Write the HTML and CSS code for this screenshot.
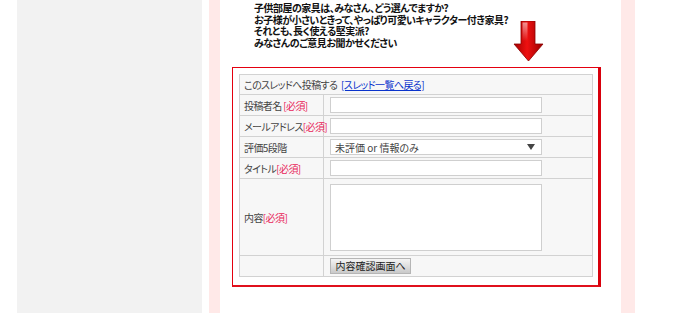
FILE: index.html
```html
<!DOCTYPE html>
<html lang="ja">
<head>
    <meta charset="UTF-8">
    <title>スレッドへ投稿する</title>
    <link rel="stylesheet" href="styles.css">
</head>
<body>

    <div class="page">
        <div class="sidebar"></div>

        <div class="main">
            <div class="intro">
                <p class="lead">
                    子供部屋の家具は、みなさん、どう選んでますか?<br>
                    お子様が小さいときって、やっぱり可愛いキャラクター付き家具?<br>
                    それとも、長く使える堅実派?<br>
                    みなさんのご意見お聞かせください
                </p>
                <svg class="arrow" width="31" height="41" viewBox="0 0 31 41">
                    <defs>
                        <linearGradient id="arrowFill" x1="0" y1="0" x2="1" y2="0">
                            <stop offset="0" stop-color="#a40000"/>
                            <stop offset="0.45" stop-color="#ee1111"/>
                            <stop offset="1" stop-color="#9a0000"/>
                        </linearGradient>
                        <linearGradient id="arrowShine" x1="0" y1="0" x2="0" y2="1">
                            <stop offset="0" stop-color="#ffffff" stop-opacity="0.55"/>
                            <stop offset="1" stop-color="#ffffff" stop-opacity="0"/>
                        </linearGradient>
                    </defs>
                    <path d="M8 0 H22 V23 H30 L15.5 40 L1 23 H8 Z" fill="url(#arrowFill)" stroke="#8a0000" stroke-width="0.8"/>
                    <path d="M9.5 1.5 H14.5 V20 H9.5 Z" fill="url(#arrowShine)"/>
                </svg>
            </div>

            <div class="form-box">
                <form>
                    <table class="post-table">
                        <colgroup>
                            <col class="col-label">
                            <col>
                        </colgroup>
                        <tr class="head-row">
                            <td colspan="2">このスレッドへ投稿する <a href="#">[スレッド一覧へ戻る]</a></td>
                        </tr>
                        <tr>
                            <th>投稿者名 <span class="req">[必須]</span></th>
                            <td><input type="text" class="field"></td>
                        </tr>
                        <tr>
                            <th>メールアドレス<span class="req">[必須]</span></th>
                            <td><input type="text" class="field"></td>
                        </tr>
                        <tr>
                            <th>評価5段階</th>
                            <td>
                                <div class="select">
                                    <span>未評価 or 情報のみ</span>
                                    <span class="caret"></span>
                                </div>
                            </td>
                        </tr>
                        <tr>
                            <th>タイトル<span class="req">[必須]</span></th>
                            <td><input type="text" class="field"></td>
                        </tr>
                        <tr class="body-row">
                            <th>内容<span class="req">[必須]</span></th>
                            <td><textarea class="field area"></textarea></td>
                        </tr>
                        <tr>
                            <th></th>
                            <td><button type="button" class="confirm">内容確認画面へ</button></td>
                        </tr>
                    </table>
                </form>
            </div>
        </div>
    </div>

</body>
</html>
```

FILE: styles.css
```css
* {
    margin: 0;
    padding: 0;
    box-sizing: border-box;
}

body {
    background: #fff;
    font-family: "Noto Sans CJK JP", "Noto Sans", sans-serif;
    font-feature-settings: "palt";
    color: #333;
}

.page {
    display: flex;
    height: 313px;
    overflow: hidden;
}

.sidebar {
    width: 185px;
    margin-left: 17px;
    background: #f2f2f2;
}

.main {
    width: 426px;
    margin-left: 7px;
    background: #fff;
    border-left: 11px solid #ffe9e8;
    border-right: 14px solid #ffe9e8;
}

/* intro text + arrow */
.intro {
    display: flex;
    height: 67px;
}

.lead {
    flex: 1;
    min-width: 0;
    padding: 2px 0 0 34px;
    font-size: 10px;
    line-height: 11.5px;
    letter-spacing: -0.5px;
    font-weight: bold;
    color: #111;
    white-space: nowrap;
}

.arrow {
    flex: none;
    margin: 21px 77px 0 0;
}

/* form */
.form-box {
    margin-left: 12px;
    width: 369px;
    padding: 6px 6px 8px 6px;
    border: 1px solid #e4000f;
    border-right: 3px solid #d8000c;
    border-bottom: 2px solid #e0101c;
}

.post-table {
    width: 354px;
    table-layout: fixed;
    border-collapse: collapse;
    background: #f7f7f7;
    font-size: 10px;
    letter-spacing: -0.6px;
    color: #444;
}

.col-label {
    width: 84px;
}

.post-table th,
.post-table td {
    border: 1px solid #d2d2d2;
    text-align: left;
    font-weight: normal;
    vertical-align: middle;
    white-space: nowrap;
}

.post-table th {
    height: 21px;
    padding: 0 0 0 4px;
}

.post-table td {
    height: 21px;
    padding: 0 0 0 6px;
}

.head-row td {
    height: 20px;
    padding-left: 4px;
}

.head-row a {
    color: #0a33cc;
    margin-left: 2px;
}

.req {
    color: #e8265a;
}

.field {
    display: block;
    width: 212px;
    height: 16px;
    border: 1px solid #cfcfcf;
    background: #fff;
    font-size: 10px;
}

.area {
    height: 67px;
    resize: none;
}

.body-row th,
.body-row td {
    height: 77px;
}

.select {
    display: flex;
    align-items: center;
    justify-content: space-between;
    width: 212px;
    height: 16px;
    padding: 0 4px;
    border: 1px solid #cfcfcf;
    background: #fff;
    color: #444;
    letter-spacing: 0;
}

.caret {
    width: 0;
    height: 0;
    border-left: 4px solid transparent;
    border-right: 4px solid transparent;
    border-top: 6px solid #444;
    margin-right: 2px;
}

.confirm {
    display: block;
    width: 81px;
    height: 16px;
    border: 1px solid #b5b5b5;
    background: linear-gradient(#f4f4f4, #c9c9c9);
    font-family: "Noto Sans CJK JP", sans-serif;
    font-feature-settings: "palt";
    font-size: 10px;
    line-height: 14px;
    color: #222;
}
```
